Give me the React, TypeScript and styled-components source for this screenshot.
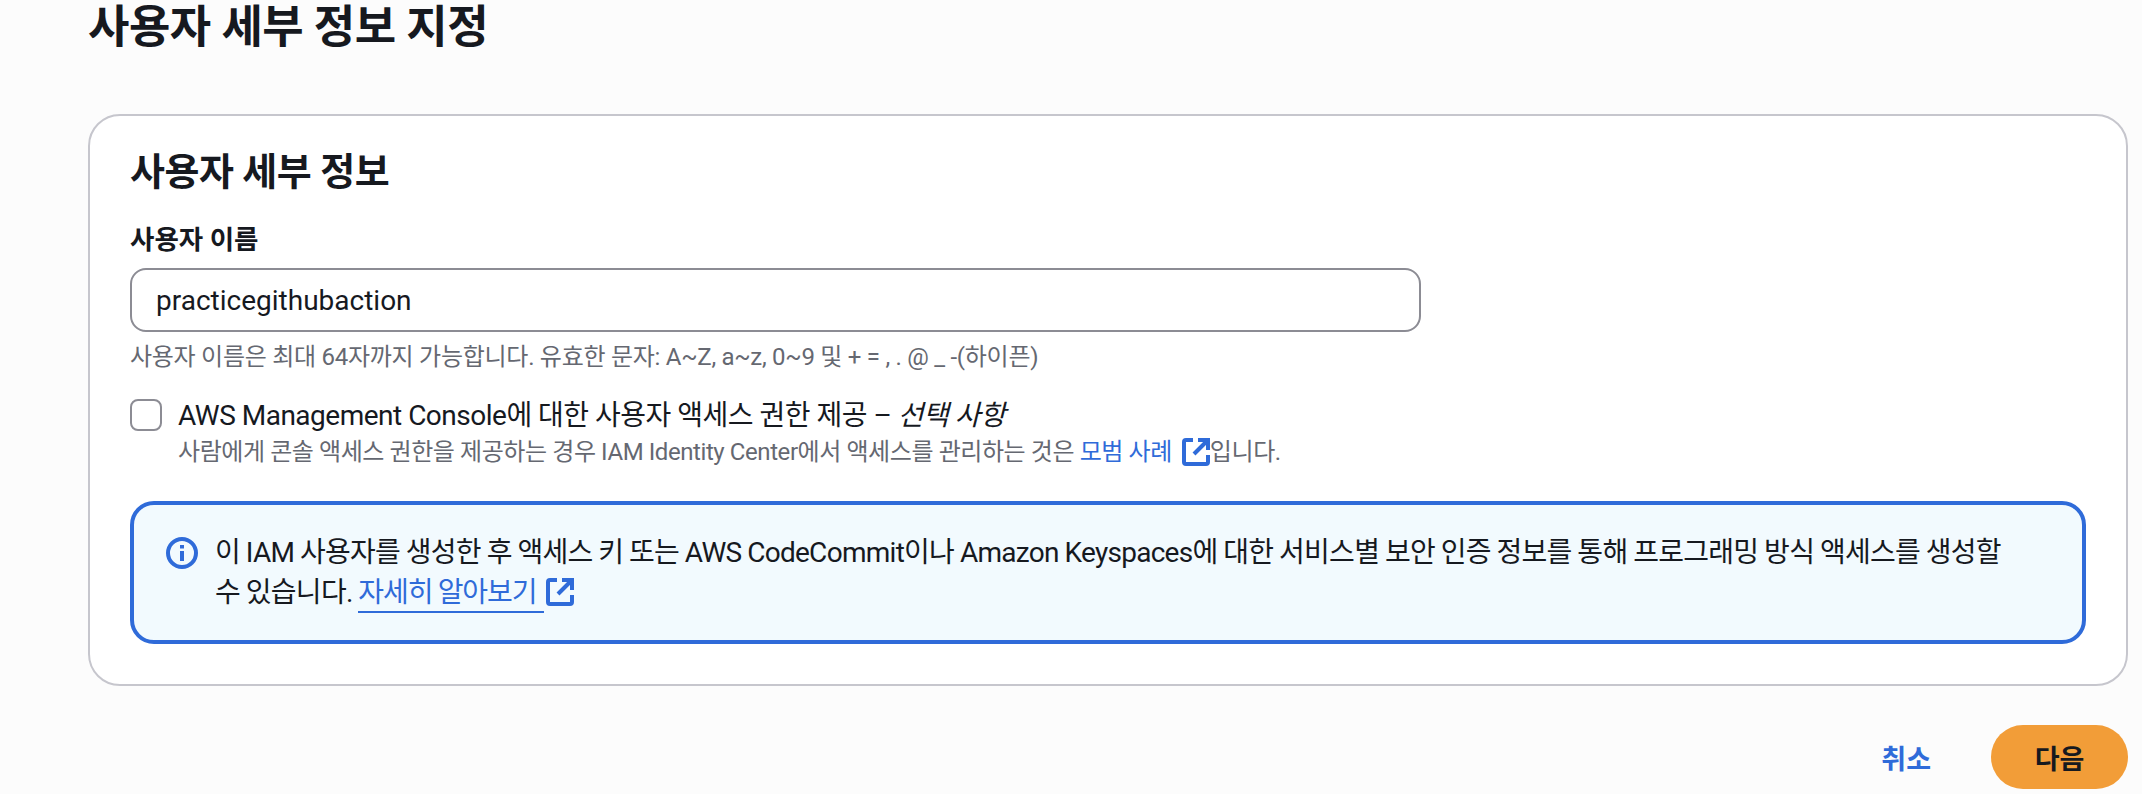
import styled, { createGlobalStyle } from "styled-components";

const GlobalStyle = createGlobalStyle`
  html, body {
    margin: 0;
    padding: 0;
    background: #fcfcfc;
  }
  body {
    font-family: Roboto, "Noto Sans CJK KR", sans-serif;
    color: #16191f;
  }
`;

const Page = styled.div`
  width: 2142px;
  height: 794px;
  overflow: hidden;
  box-sizing: border-box;
  padding: 0 14px 0 88px;
  display: flex;
  flex-direction: column;
`;

const Heading = styled.h1`
  margin: 0;
  height: 114px;
  font-size: 45px;
  line-height: 56px;
  font-weight: 700;
  letter-spacing: -0.5px;
`;

const Card = styled.section`
  box-sizing: border-box;
  height: 572px;
  background: #fff;
  border: 2px solid #c6c6cd;
  border-radius: 32px;
  padding: 30px 40px 0;
  display: flex;
  flex-direction: column;
`;

const CardTitle = styled.h2`
  margin: 0 0 24px;
  font-size: 38px;
  line-height: 52px;
  font-weight: 700;
  letter-spacing: -0.5px;
`;

const Label = styled.label`
  font-size: 26.5px;
  line-height: 36px;
  font-weight: 700;
  margin-bottom: 10px;
`;

const Input = styled.input`
  box-sizing: border-box;
  width: 1291px;
  height: 64px;
  border: 2px solid #8c8c94;
  border-radius: 16px;
  padding: 0 24px;
  font: inherit;
  font-size: 28px;
  color: #16191f;
  background: #fff;
`;

const Helper = styled.p`
  margin: 8px 0 23px;
  font-size: 24px;
  line-height: 34px;
  letter-spacing: -0.27px;
  color: #656871;
`;

const CheckRow = styled.div`
  display: flex;
  gap: 16px;
  align-items: flex-start;
`;

const CheckBox = styled.span`
  box-sizing: border-box;
  flex: none;
  width: 32px;
  height: 32px;
  margin-top: 2px;
  border: 2px solid #8c8c94;
  border-radius: 8px;
  background: #fff;
`;

const CheckText = styled.div`
  display: flex;
  flex-direction: column;
`;

const CheckTitle = styled.div`
  font-size: 28px;
  line-height: 38px;
  letter-spacing: -0.5px;
  em {
    font-style: italic;
  }
`;

const CheckHint = styled.div`
  font-size: 24px;
  line-height: 34px;
  letter-spacing: -0.42px;
  color: #656871;
  display: flex;
  align-items: center;
  white-space: pre;
`;

const Link = styled.a`
  color: #2f6bd9;
  text-decoration: none;
`;

const Alert = styled.div`
  box-sizing: border-box;
  margin-top: 32px;
  width: 1956px;
  height: 143px;
  background: #f2fafe;
  border: 4px solid #2f6bd9;
  border-radius: 24px;
  padding: 28px 56px 0 32px;
  display: flex;
  gap: 17px;
`;

const AlertIcon = styled.svg`
  flex: none;
  width: 32px;
  height: 32px;
  margin-top: 4px;
`;

const AlertText = styled.div`
  font-size: 28px;
  line-height: 40px;
  letter-spacing: -0.72px;
  word-spacing: -0.5px;
`;

const LearnMore = styled(Link)`
  border-bottom: 2px solid #2f6bd9;
  padding-bottom: 2px;
  padding-right: 8px;
  letter-spacing: -1.1px;
`;

const External = styled.svg`
  width: 28px;
  height: 28px;
  flex: none;
`;

const InlineExternal = styled(External)`
  vertical-align: -4px;
  margin-left: 2px;
`;

const HintExternal = styled(External)`
  margin-left: 10px;
`;

const Actions = styled.div`
  display: flex;
  justify-content: flex-end;
  align-items: center;
  gap: 60px;
  margin-top: 39px;
`;

const CancelButton = styled.button`
  border: 0;
  background: none;
  padding: 0;
  font: inherit;
  font-size: 27px;
  font-weight: 700;
  color: #2f6bd9;
`;

const NextButton = styled.button`
  width: 137px;
  height: 64px;
  border: 0;
  border-radius: 32px;
  background: #f29d38;
  font: inherit;
  font-size: 27px;
  font-weight: 700;
  color: #16191f;
`;

const externalPaths = (
  <>
    <path d="M11 2H4a2 2 0 0 0-2 2v20a2 2 0 0 0 2 2h20a2 2 0 0 0 2-2v-7" strokeWidth="4" strokeLinejoin="round" />
    <path d="M16 2h10v10" strokeWidth="4" />
    <path d="M25 3L12 16" strokeWidth="4" />
  </>
);

const App = () => {
  return (
    <Page>
      <GlobalStyle />
      <Heading>사용자 세부 정보 지정</Heading>
      <Card>
        <CardTitle>사용자 세부 정보</CardTitle>
        <Label>사용자 이름</Label>
        <Input defaultValue="practicegithubaction" />
        <Helper>사용자 이름은 최대 64자까지 가능합니다. 유효한 문자: A~Z, a~z, 0~9 및 + = , . @ _ -(하이픈)</Helper>
        <CheckRow>
          <CheckBox />
          <CheckText>
            <CheckTitle>
              AWS Management Console에 대한 사용자 액세스 권한 제공 – <em>선택 사항</em>
            </CheckTitle>
            <CheckHint>
              사람에게 콘솔 액세스 권한을 제공하는 경우 IAM Identity Center에서 액세스를 관리하는 것은 <Link>모범 사례</Link>
              <HintExternal viewBox="0 0 28 28" fill="none" stroke="#2f6bd9">
                {externalPaths}
              </HintExternal>
              입니다.
            </CheckHint>
          </CheckText>
        </CheckRow>
        <Alert>
          <AlertIcon viewBox="0 0 32 32" fill="none">
            <circle cx="16" cy="16" r="14" stroke="#2f6bd9" strokeWidth="4" />
            <path d="M16 14v10" stroke="#2f6bd9" strokeWidth="4" />
            <path d="M16 8v3.5" stroke="#2f6bd9" strokeWidth="4" />
          </AlertIcon>
          <AlertText>
            이 IAM 사용자를 생성한 후 액세스 키 또는 AWS CodeCommit이나 Amazon Keyspaces에 대한 서비스별 보안 인증 정보를 통해 프로그래밍 방식 액세스를 생성할 수 있습니다.{" "}
            <LearnMore>자세히 알아보기</LearnMore>
            <InlineExternal viewBox="0 0 28 28" fill="none" stroke="#2f6bd9">
              {externalPaths}
            </InlineExternal>
          </AlertText>
        </Alert>
      </Card>
      <Actions>
        <CancelButton>취소</CancelButton>
        <NextButton>다음</NextButton>
      </Actions>
    </Page>
  );
};

export default App;
